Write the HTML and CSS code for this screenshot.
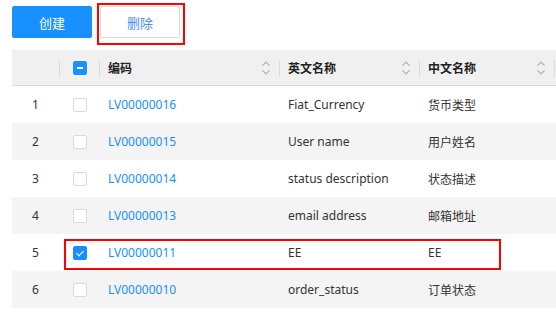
FILE: index.html
```html
<!DOCTYPE html>
<html lang="zh-CN">
<head>
  <meta charset="UTF-8">
  <title>数据字典</title>
  <link rel="stylesheet" href="styles.css">
</head>
<body>

  <!-- Toolbar -->
  <div class="toolbar">
    <button class="btn btn-primary">创建</button>
    <button class="btn btn-default marked">删除</button>
  </div>

  <!-- Table -->
  <div class="table-wrap">
    <table class="grid">
      <colgroup>
        <col class="col-index">
        <col class="col-check">
        <col class="col-code">
        <col class="col-en">
        <col class="col-cn">
        <col>
      </colgroup>
      <thead>
        <tr>
          <th></th>
          <th class="cell-check"><span class="checkbox indeterminate"></span></th>
          <th><div class="th-inner">编码<svg class="sorter" width="8" height="14" viewBox="0 0 8 14"><path d="M0.5 4.5 L4 1 L7.5 4.5 M0.5 9.5 L4 13 L7.5 9.5" fill="none" stroke="#b3b3b3" stroke-width="1.2"/></svg></div></th>
          <th><div class="th-inner">英文名称<svg class="sorter" width="8" height="14" viewBox="0 0 8 14"><path d="M0.5 4.5 L4 1 L7.5 4.5 M0.5 9.5 L4 13 L7.5 9.5" fill="none" stroke="#b3b3b3" stroke-width="1.2"/></svg></div></th>
          <th><div class="th-inner">中文名称<svg class="sorter" width="8" height="14" viewBox="0 0 8 14"><path d="M0.5 4.5 L4 1 L7.5 4.5 M0.5 9.5 L4 13 L7.5 9.5" fill="none" stroke="#b3b3b3" stroke-width="1.2"/></svg></div></th>
          <th></th>
        </tr>
      </thead>
      <tbody>
        <tr>
          <td class="cell-index">1</td>
          <td class="cell-check"><span class="checkbox"></span></td>
          <td><a href="#">LV00000016</a></td>
          <td>Fiat_Currency</td>
          <td>货币类型</td>
          <td></td>
        </tr>
        <tr>
          <td class="cell-index">2</td>
          <td class="cell-check"><span class="checkbox"></span></td>
          <td><a href="#">LV00000015</a></td>
          <td>User name</td>
          <td>用户姓名</td>
          <td></td>
        </tr>
        <tr>
          <td class="cell-index">3</td>
          <td class="cell-check"><span class="checkbox"></span></td>
          <td><a href="#">LV00000014</a></td>
          <td>status description</td>
          <td>状态描述</td>
          <td></td>
        </tr>
        <tr>
          <td class="cell-index">4</td>
          <td class="cell-check"><span class="checkbox"></span></td>
          <td><a href="#">LV00000013</a></td>
          <td>email address</td>
          <td>邮箱地址</td>
          <td></td>
        </tr>
        <tr>
          <td class="cell-index">5</td>
          <td class="cell-check row-marked"><span class="checkbox checked"></span></td>
          <td><a href="#">LV00000011</a></td>
          <td>EE</td>
          <td>EE</td>
          <td></td>
        </tr>
        <tr>
          <td class="cell-index">6</td>
          <td class="cell-check"><span class="checkbox"></span></td>
          <td><a href="#">LV00000010</a></td>
          <td>order_status</td>
          <td>订单状态</td>
          <td></td>
        </tr>
      </tbody>
    </table>
  </div>

</body>
</html>
```

FILE: styles.css
```css
/* General */
body {
  margin: 0;
  padding: 0;
  font-family: 'Noto Sans', 'Noto Sans CJK SC', sans-serif;
  font-size: 12px;
  color: #333;
  background-color: #fff;
  overflow: hidden;
}

/* Toolbar */
.toolbar {
  display: flex;
  gap: 8px;
  padding: 6px 0 0 12px;
  height: 32px;
}

.btn {
  width: 80px;
  height: 32px;
  border-radius: 2px;
  font-family: inherit;
  font-size: 13px;
  cursor: pointer;
  position: relative;
}

.btn-primary {
  background-color: #1890ff;
  border: 1px solid #1890ff;
  color: #fff;
}

.btn-default {
  background-color: #fff;
  border: 1px solid #d9d9d9;
  color: #4b8ff0;
}

/* red annotation boxes */
.marked::after {
  content: "";
  position: absolute;
  left: -4px;
  top: -4px;
  right: -6px;
  bottom: -8px;
  border: 2px solid #f00;
}

/* Table */
.table-wrap {
  margin-top: 12px;
  padding-left: 12px;
  overflow: hidden;
}

.grid {
  width: 700px;
  border-collapse: collapse;
  table-layout: fixed;
}

.col-index { width: 47px; }
.col-check { width: 40px; }
.col-code  { width: 180px; }
.col-en    { width: 140px; }
.col-cn    { width: 135px; }

.grid th {
  height: 35px;
  background-color: #f0f0f0;
  border-bottom: 1px solid #d9d9d9;
  text-align: left;
  font-weight: 700;
  color: #222;
  padding: 0 9px;
  position: relative;
}

.grid th + th::before {
  content: "";
  position: absolute;
  left: 0;
  top: 10px;
  width: 1px;
  height: 17px;
  background-color: #dcdcdc;
}

.th-inner {
  display: flex;
  align-items: center;
  justify-content: space-between;
}

.sorter {
  display: block;
}

.grid td {
  height: 37px;
  padding: 0 9px;
  white-space: nowrap;
}

.grid tbody tr:nth-child(even) td {
  background-color: #f4f4f4;
}

.grid td.cell-index {
  text-align: center;
  padding: 0;
}

.grid .cell-check {
  padding: 0 0 0 14px;
  position: relative;
}

.grid a {
  color: #1890ff;
  text-decoration: none;
}

/* Checkbox */
.checkbox {
  display: block;
  width: 14px;
  height: 14px;
  box-sizing: border-box;
  border: 1px solid #d9d9d9;
  border-radius: 2px;
  background-color: #fff;
  position: relative;
}

.checkbox.checked,
.checkbox.indeterminate {
  background-color: #1890ff;
  border-color: #1890ff;
}

.checkbox.checked::after {
  content: "";
  position: absolute;
  left: 4px;
  top: 2px;
  width: 3px;
  height: 6px;
  border: solid #fff;
  border-width: 0 1.5px 1.5px 0;
  transform: rotate(45deg);
}

.checkbox.indeterminate::after {
  content: "";
  position: absolute;
  left: 3px;
  top: 5px;
  width: 6px;
  height: 2px;
  background-color: #fff;
}

.row-marked::after {
  content: "";
  position: absolute;
  left: 5px;
  top: 5px;
  width: 437px;
  height: 31px;
  box-sizing: border-box;
  border: 2px solid #f00;
}
```
